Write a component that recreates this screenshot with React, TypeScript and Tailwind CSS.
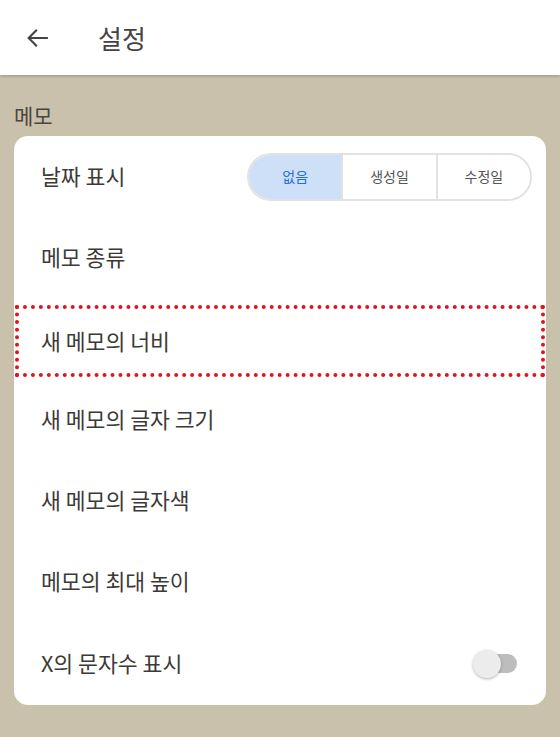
import { useState } from 'react'

const FONT = { fontFamily: '"Noto Sans CJK KR", "Noto Sans", sans-serif' }

type DateMode = 'none' | 'created' | 'modified'

const dateOptions: { key: DateMode; label: string }[] = [
  { key: 'none', label: '없음' },
  { key: 'created', label: '생성일' },
  { key: 'modified', label: '수정일' },
]

function Row({ children }: { children: React.ReactNode }) {
  return <div className="h-[81px] flex items-center pl-[27px] pr-[14px]">{children}</div>
}

export default function App() {
  const [dateMode, setDateMode] = useState<DateMode>('none')
  const [showCount, setShowCount] = useState(false)

  return (
    <div className="w-[560px] h-[737px] bg-[#c9c1ab] flex flex-col overflow-hidden" style={FONT}>
      <header className="h-[75px] bg-white flex items-center shadow-[0_1px_3px_rgba(0,0,0,0.25)] relative z-10 shrink-0">
        <button className="w-[50px] ml-[13px] h-[50px] flex items-center justify-center text-[#444]">
          <svg width="28" height="28" viewBox="0 0 24 24" fill="none" stroke="currentColor" strokeWidth="1.8">
            <path d="M20.5 12H4M11 5l-7 7 7 7" />
          </svg>
        </button>
        <h1 className="ml-[35px] text-[26px] text-[#444] leading-none">설정</h1>
      </header>

      <div className="px-[14px]">
        <div className="h-[61px] flex items-end pb-[10px] text-[21px] text-[#4a463e] leading-none">메모</div>

        <div className="bg-white rounded-[14px] flex flex-col">
          <Row>
            <span className="flex-1 text-[21.6px] text-[#3c3a36]">날짜 표시</span>
            <div className="flex h-[48px] w-[285px] rounded-full border-2 border-[#e2e2e2] overflow-hidden">
              {dateOptions.map((o, i) => (
                <button
                  key={o.key}
                  onClick={() => setDateMode(o.key)}
                  className={
                    'flex-1 flex items-center justify-center text-[14px] ' +
                    (i > 0 ? 'border-l-2 border-[#e2e2e2] ' : '') +
                    (dateMode === o.key ? 'bg-[#cde0f7] text-[#2a6fd6]' : 'bg-white text-[#555]')
                  }
                >
                  {o.label}
                </button>
              ))}
            </div>
          </Row>
          <Row>
            <span className="text-[21.6px] text-[#3c3a36]">메모 종류</span>
          </Row>
          <div className="h-[81px] px-[1px] pt-[7px] pb-[2px] flex">
            <div className="flex-1 flex items-center pl-[22px] border-[4px] border-dotted border-[#e0141e]">
              <span className="text-[21.6px] text-[#3c3a36]">새 메모의 너비</span>
            </div>
          </div>
          <Row>
            <span className="text-[21.6px] text-[#3c3a36]">새 메모의 글자 크기</span>
          </Row>
          <Row>
            <span className="text-[21.6px] text-[#3c3a36]">새 메모의 글자색</span>
          </Row>
          <Row>
            <span className="text-[21.6px] text-[#3c3a36]">메모의 최대 높이</span>
          </Row>
          <div className="h-[83px] flex items-center pl-[27px] pr-[29px]">
            <span className="flex-1 text-[21.6px] text-[#3c3a36]">X의 문자수 표시</span>
            <button onClick={() => setShowCount(!showCount)} className="relative w-[44px] h-[28px] flex items-center">
              <span className="absolute right-0 w-[36px] h-[19px] rounded-full bg-[#bdbdbd]" />
              <span className="absolute left-0 w-[28px] h-[28px] rounded-full bg-[#ececec] shadow-[0_1px_3px_rgba(0,0,0,0.3)]" />
            </button>
          </div>
        </div>
      </div>
    </div>
  )
}
